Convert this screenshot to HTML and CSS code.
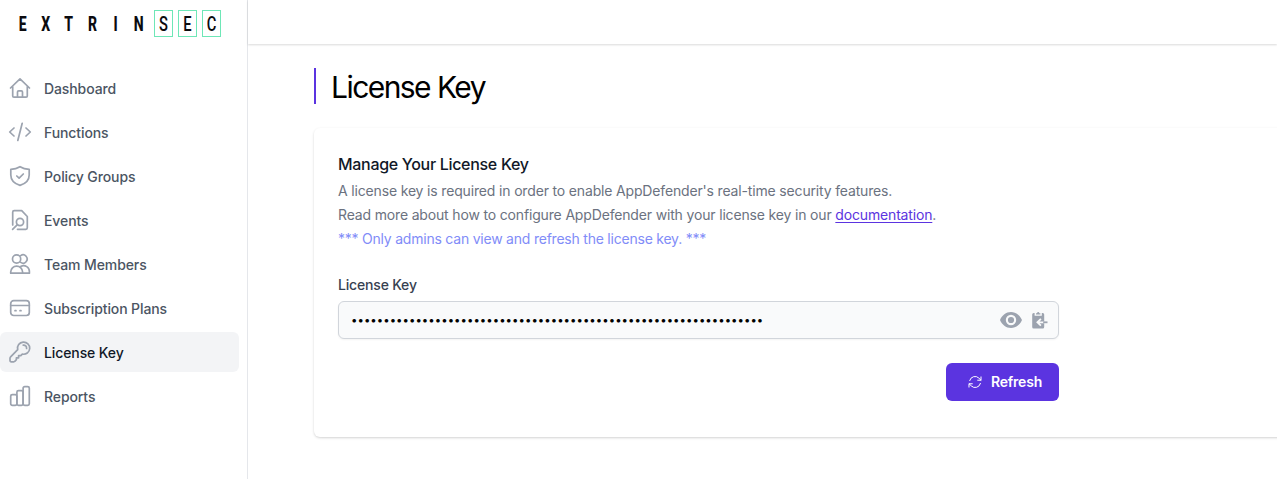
FILE: index.html
```html
<!DOCTYPE html>
<html lang="en">
<head>
<meta charset="utf-8">
<title>License Key</title>
<link rel="stylesheet" href="styles.css">
</head>
<body>
<div class="app">
  <aside class="sidebar">
    <div class="logo"><b><i>E</i></b><b><i>X</i></b><b><i>T</i></b><b><i>R</i></b><b><i>I</i></b><b><i>N</i></b><span class="boxed"><i>S</i></span><span class="boxed"><i>E</i></span><span class="boxed"><i>C</i></span></div>
    <nav class="nav">
      <a class="item"><svg viewBox="0 0 24 24"><path d="M2.500 12 12 2.800 21.500 12M4.700 10.500V20q0 1.200 1.200 1.200H18.100q1.200 0 1.200-1.200V10.500M9.500 21V16q0-1.200 1.200-1.200h2.600q1.200 0 1.200 1.200v5"/></svg><span>Dashboard</span></a>
      <a class="item"><svg viewBox="0 0 24 24"><path d="M6 8 1.700 12 6 16M18 8l4.300 4L18 16M14.200 3.300 9.800 20.500"/></svg><span>Functions</span></a>
      <a class="item"><svg viewBox="0 0 24 24"><path d="M12 2.700Q16 5.200 21.200 5.300V11Q21.200 18.500 12 21.400Q2.800 18.500 2.800 11V5.300Q8 5.200 12 2.700ZM8.800 12l2.300 2.200 4.200-4.200"/></svg><span>Policy Groups</span></a>
      <a class="item"><svg viewBox="0 0 24 24"><path d="M4.700 17V4.200q0-1.500 1.500-1.500h7.500L19.300 8.500V19.800q0 1.500-1.500 1.500H9.500M9.400 16.700 4.600 21.400"/><circle cx="12" cy="14" r="3.600"/></svg><span>Events</span></a>
      <a class="item"><svg viewBox="0 0 24 24"><circle cx="8.600" cy="7" r="4.100"/><path d="M12.700 3.600a4.100 4.100 0 1 1 0 6.800M2.700 21.200V20a5.800 5.800 0 0 1 11.900 0v1.200ZM13 14.200a5.900 5.900 0 0 1 8.400 5.600v1.400H14.600"/></svg><span>Team Members</span></a>
      <a class="item"><svg viewBox="0 0 24 24"><rect x="2.700" y="4.700" width="18.600" height="14.800" rx="3"/><path d="M2.700 9.500H21.300M7 14.700h1M12 14.700h1"/></svg><span>Subscription Plans</span></a>
      <a class="item active"><svg viewBox="0 0 24 24"><path d="M9.700 9.600A6.100 6.100 0 1 1 14.300 14.100L12.800 15.600H10.600V17.800H8.400V19.600L6.800 21.300Q6.400 21.800 5.800 21.800H3.200Q2 21.800 2 20.600V18.300Q2 17.700 2.400 17.200Z"/><path d="M15.200 5.200Q18.600 5 18.600 8.400"/></svg><span>License Key</span></a>
      <a class="item"><svg viewBox="0 0 24 24"><rect x="2.700" y="10.700" width="6.200" height="10.600" rx="1.600"/><rect x="8.900" y="6.700" width="6.200" height="14.600" rx="1.600"/><rect x="15.100" y="2.700" width="6.200" height="18.600" rx="1.600"/></svg><span>Reports</span></a>
    </nav>
  </aside>
  <div class="main">
    <header class="topbar"></header>
    <main class="content">
      <h1 class="title">License Key</h1>
      <section class="card">
        <h2>Manage Your License Key</h2>
        <p>A license key is required in order to enable AppDefender's real-time security features.</p>
        <p>Read more about how to configure AppDefender with your license key in our <a class="doc">documentation</a>.</p>
        <p class="note">*** Only admins can view and refresh the license key. ***</p>
        <div class="form">
          <div class="label">License Key</div>
          <div class="field">
            <span class="dots">••••••••••••••••••••••••••••••••••••••••••••••••••••••••••••••••</span>
            <svg class="eye" viewBox="0 0 22 16"><path fill-rule="evenodd" d="M11 0C16 0 20 3.300 22 8c-2 4.700-6 8-11 8S2 12.700 0 8C2 3.300 6 0 11 0Zm0 2.800a5.200 5.200 0 1 0 0 10.400a5.200 5.200 0 0 0 0-10.400Zm0 2.100a3.100 3.100 0 1 1 0 6.200a3.100 3.100 0 0 1 0-6.200Z"/></svg>
            <svg class="paste" viewBox="0 0 16 17"><path d="M1.700 1H2.600V3.800H9.800V1h.9Q12.200 1 12.200 2.500V15q0 1.500-1.500 1.500H1.700Q.2 16.500.2 15V2.500Q.2 1 1.700 1ZM4 2.600V1.200H5Q5.200 0 6.200 0t1.200 1.200h1V2.600Z"/><path class="arrow" d="M12.300 10.300H5.500M8.900 6.900 5.400 10.300l3.500 3.400"/><path d="M11.200 9.400h4.300v1.800h-4.300Z"/></svg>
          </div>
          <div class="actions"><button class="refresh"><svg viewBox="0 0 24 24"><path d="M16.023 9.348h4.992V4.356M2.985 19.644v-4.992h4.992M3.200 14.650l3.181 3.183a8.250 8.250 0 0 0 13.803-3.700M4.031 9.865a8.250 8.250 0 0 1 13.803-3.700l3.181 3.182"/></svg><span>Refresh</span></button></div>
        </div>
      </section>
    </main>
  </div>
</div>
</body>
</html>
```
FILE: styles.css
```css
* { box-sizing: border-box; }
body { margin: 0; font-family: Inter, sans-serif; font-size: 14px; background: #fff; }
h1, h2, p { margin: 0; font-weight: 400; }
.app { display: flex; height: 479px; overflow: hidden; }
.sidebar { width: 248px; flex: none; border-right: 1px solid #e5e7eb; }
.logo { display: flex; height: 48px; padding: 10px 0 0 11px; font-family: Roboto, sans-serif; font-size: 20px; line-height: 28px; color: #0b0b0f; }
.logo i { display: block; font-style: normal; transform: scaleX(.7); }
.logo b { width: 23.200px; height: 27px; text-align: center; font-weight: 800; }
.boxed { width: 19px; height: 27px; line-height: 26px; border: 1px solid #6ee7b7; text-align: center; font-weight: 500; font-size: 21px; margin-left: 4px; margin-right: 1px; }
.nav { display: flex; flex-direction: column; gap: 4px; padding-top: 20px; }
.item { display: flex; align-items: center; gap: 12px; height: 40px; width: 239px; padding-left: 8px; border-radius: 6px; color: #4b5563; font-weight: 550; line-height: 20px; letter-spacing: -.100px; white-space: nowrap; }
.item svg { width: 24px; height: 24px; fill: none; stroke: #9ca3af; stroke-width: 1.700; stroke-linecap: round; stroke-linejoin: round; }
.item span { padding-top: 2px; }
.active { background: #f3f4f6; color: #111827; }
.main { flex: 1; min-width: 0; }
.topbar { height: 44px; box-shadow: 0 1px 2px rgba(0,0,0,.15); }
.content { padding: 24px 0 0 66px; }
.title { height: 36px; line-height: 39px; border-left: 2px solid #5b34e0; padding-left: 15px; font-size: 30px; letter-spacing: -1.550px; color: #000; }
.card { margin: 24px -8px 0 0; height: 309px; padding: 24px; border-radius: 6px; box-shadow: 0 1px 3px rgba(0,0,0,.12), 0 1px 2px rgba(0,0,0,.06); white-space: nowrap; }
.card h2 { font-size: 16px; line-height: 24px; font-weight: 500; letter-spacing: -.310px; color: #111827; padding-bottom: 3px; }
.card p { line-height: 24px; font-weight: 430; letter-spacing: -.162px; color: #6b7280; }
.card .note { color: #818cf8; letter-spacing: -.222px; }
.doc { color: #5b34e0; text-decoration: underline; text-decoration-thickness: 1px; text-underline-offset: 2px; }
.form { width: 721px; padding-top: 24px; }
.label { font-weight: 550; letter-spacing: -.180px; color: #374151; line-height: 20px; }
.field { display: flex; align-items: center; height: 38px; margin-top: 6px; border: 1px solid #d1d5db; border-radius: 6px; background: #f9fafb; box-shadow: 0 1px 2px rgba(0,0,0,.05); padding: 0 11px 0 12px; }
.dots { flex: 1; color: #000; font-size: 11.400px; letter-spacing: .035px; padding-bottom: 1px; }
.field svg { fill: #9ca3af; }
.eye { width: 22px; height: 16px; }
.paste { width: 16px; height: 17px; margin: 0 -1px 0 10px; }
.paste .arrow { fill: none; stroke: #f9fafb; stroke-width: 1.800; }
.actions { display: flex; justify-content: flex-end; padding-top: 24px; }
.refresh { display: flex; align-items: center; width: 113px; height: 38px; border: 0; border-radius: 6px; background: #5b34e0; color: #fff; padding: 0 0 0 21px; gap: 8px; font: 600 14px/20px Inter, sans-serif; letter-spacing: -.200px; }
.refresh svg { width: 16px; height: 16px; fill: none; stroke: #fff; stroke-width: 1.500; stroke-linecap: round; stroke-linejoin: round; }
```
